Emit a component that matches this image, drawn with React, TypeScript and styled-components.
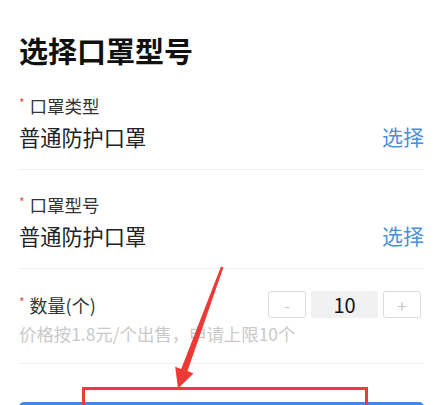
import React from 'react'
import styled, { createGlobalStyle } from 'styled-components'

const GlobalStyle = createGlobalStyle`
  html, body {
    margin: 0;
    padding: 0;
    background: #ffffff;
    font-family: "Noto Sans CJK SC", "Noto Sans", sans-serif;
  }
`

const fields = [
  { label: '口罩类型', value: '普通防护口罩' },
  { label: '口罩型号', value: '普通防护口罩' },
]

const App = () => {
  const [count, setCount] = React.useState<number>(10)
  return (
    <>
      <GlobalStyle />
      <Page>
        <Title>选择口罩型号</Title>
        {fields.map((f) => (
          <Section key={f.label}>
            <Label>
              <Star>*</Star>
              {f.label}
            </Label>
            <ValueRow>
              <Value>{f.value}</Value>
              <Pick>选择</Pick>
            </ValueRow>
          </Section>
        ))}
        <Section $top={22} $bottom={21}>
          <CountRow>
            <Label $size={18}>
              <Star>*</Star>
              数量(个)
            </Label>
            <Stepper>
              <StepBtn onClick={() => setCount(Math.max(1, count - 1))}>-</StepBtn>
              <CountBox>{count}</CountBox>
              <StepBtn onClick={() => setCount(Math.min(10, count + 1))}>+</StepBtn>
            </Stepper>
          </CountRow>
          <Hint>价格按1.8元/个出售，申请上限10个</Hint>
        </Section>
        <Submit />

        {/* red annotation drawn over the screenshot */}
        <Overlay viewBox="0 0 435 405" width="435" height="405">
          <polygon
            points="221,266.4 223.4,267.4 187.5,371 193.5,373.4 178,388.5 175.2,366.8 181.2,369"
            fill="#ee3a36"
          />
          <rect x="83.5" y="388.5" width="283" height="40" fill="none" stroke="#ee3a36" strokeWidth="3" />
        </Overlay>
      </Page>
    </>
  )
}

export default App

const Overlay = styled.svg`
  position: absolute;
  left: 0;
  top: 0;
  pointer-events: none;
`

const Submit = styled.div`
  margin-top: 38px;
  height: 48px;
  border-radius: 5px;
  background-color: #3d8be6;
`

const Hint = styled.div`
  margin-top: 7px;
  font-size: 17.4px;
  line-height: 17px;
  color: #c9c9c9;
  white-space: nowrap;
`

const CountBox = styled.div`
  width: 67px;
  height: 27px;
  background-color: #f1f1f1;
  border-radius: 2px;
  display: flex;
  align-items: center;
  justify-content: center;
  font-size: 20px;
  color: #111;
`

const StepBtn = styled.div`
  box-sizing: border-box;
  width: 38px;
  height: 27px;
  border: 1px solid #dcdcdc;
  border-radius: 3px;
  display: flex;
  align-items: center;
  justify-content: center;
  font-size: 16px;
  color: #c4c4c4;
  cursor: pointer;
`

const Stepper = styled.div`
  display: flex;
  align-items: center;
  gap: 5px;
  margin-right: 3px;
`

const CountRow = styled.div`
  display: flex;
  align-items: center;
  justify-content: space-between;
  height: 27px;
`

const Pick = styled.span`
  font-size: 21px;
  color: #4b91d6;
  cursor: pointer;
`

const Value = styled.span`
  font-size: 21.2px;
  color: #222;
`

const ValueRow = styled.div`
  margin-top: 12px;
  display: flex;
  align-items: center;
  justify-content: space-between;
  line-height: 21px;
`

const Star = styled.span`
  font-size: 12px;
  color: #d9534f;
  margin-right: 5px;
  align-self: flex-start;
  line-height: 12px;
`

const Label = styled.div<{ $size?: number }>`
  display: flex;
  align-items: center;
  font-size: ${(p) => p.$size || 17.5}px;
  line-height: ${(p) => p.$size || 17}px;
  color: #333;
`

const Section = styled.div<{ $top?: number; $bottom?: number }>`
  padding-top: ${(p) => p.$top ?? 26}px;
  padding-bottom: ${(p) => p.$bottom ?? 22}px;
  border-bottom: 1px solid #f0f0f0;
`

const Title = styled.h1`
  margin: 0 0 6px 0;
  font-size: 29px;
  line-height: 29px;
  font-weight: 700;
  color: #111;
`

const Page = styled.div`
  position: relative;
  height: 405px;
  overflow: hidden;
  box-sizing: border-box;
  padding: 36px 11px 0 19px;
`
